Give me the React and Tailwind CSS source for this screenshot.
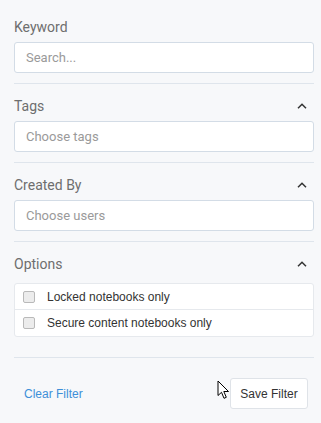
import React from "react";

const Chevron = () => (
  <svg width="10" height="6" viewBox="0 0 10 6" className="mr-[7px]">
    <path d="M1 5.2 L5 1.2 L9 5.2" fill="none" stroke="#333" strokeWidth="1.5" />
  </svg>
);

function Section({ label, collapsible, children, last }) {
  return (
    <div className={last ? "pt-[12px] pb-[20px] border-b border-[#dfe5ec]" : "pt-[12px] pb-[10px] border-b border-[#dfe5ec]"}>
      <div className="flex h-[20px] items-center justify-between">
        <span className="text-[14px] text-[#6e6e6e]" style={{ fontFamily: "Roboto, sans-serif" }}>{label}</span>
        {collapsible && <Chevron />}
      </div>
      {children}
    </div>
  );
}

function Field({ placeholder, mt }) {
  return (
    <div className={`${mt} flex h-[31px] items-center rounded-[3px] border border-[#d3dce6] bg-white px-[11px]`}>
      <span className="text-[13px] text-[#9a9a9a]" style={{ fontFamily: "Roboto, sans-serif" }}>{placeholder}</span>
    </div>
  );
}

function Check({ label, border }) {
  return (
    <div className={`flex h-[26px] items-center gap-[12px] px-[8px] ${border ? "border-b border-[#e6e9ed]" : ""}`}>
      <span className="h-[12px] w-[12px] rounded-[2px] border border-[#b9b9b9] bg-[#ececec]" />
      <span className="text-[12px] text-[#333]">{label}</span>
    </div>
  );
}

export default function App() {
  return (
    <div className="relative h-[423px] w-[321px] bg-[#f7f8fa] pl-[14px] pr-[7px] pt-[5px]" style={{ fontFamily: '"Liberation Sans", Arial, sans-serif' }}>
      <Section label="Keyword">
        <Field placeholder="Search..." mt="mt-[5px]" />
      </Section>
      <Section label="Tags" collapsible>
        <Field placeholder="Choose tags" mt="mt-[5px]" />
      </Section>
      <Section label="Created By" collapsible>
        <Field placeholder="Choose users" mt="mt-[5px]" />
      </Section>
      <Section label="Options" collapsible last>
        <div className="mt-[9px] rounded-[3px] border border-[#e6e9ed] bg-white">
          <Check label="Locked notebooks only" border />
          <Check label="Secure content notebooks only" />
        </div>
      </Section>
      <div className="mt-[20px] flex items-center justify-between">
        <button className="ml-[10px] text-[12px] text-[#3d8fd8]">Clear Filter</button>
        <button className="mr-[6px] h-[31px] w-[78px] rounded-[3px] border border-[#dfe3e8] bg-white text-[12px] text-[#333]">Save Filter</button>
      </div>
      <svg className="absolute left-[217px] top-[380px]" width="14" height="20" viewBox="0 0 14 20">
        <path d="M1 1 L1 15.5 L4.5 12.3 L7 18.3 L9.3 17.3 L6.8 11.5 L11.5 11.5 Z" fill="#fff" stroke="#000" strokeWidth="1" strokeLinejoin="round" />
      </svg>
    </div>
  );
}
